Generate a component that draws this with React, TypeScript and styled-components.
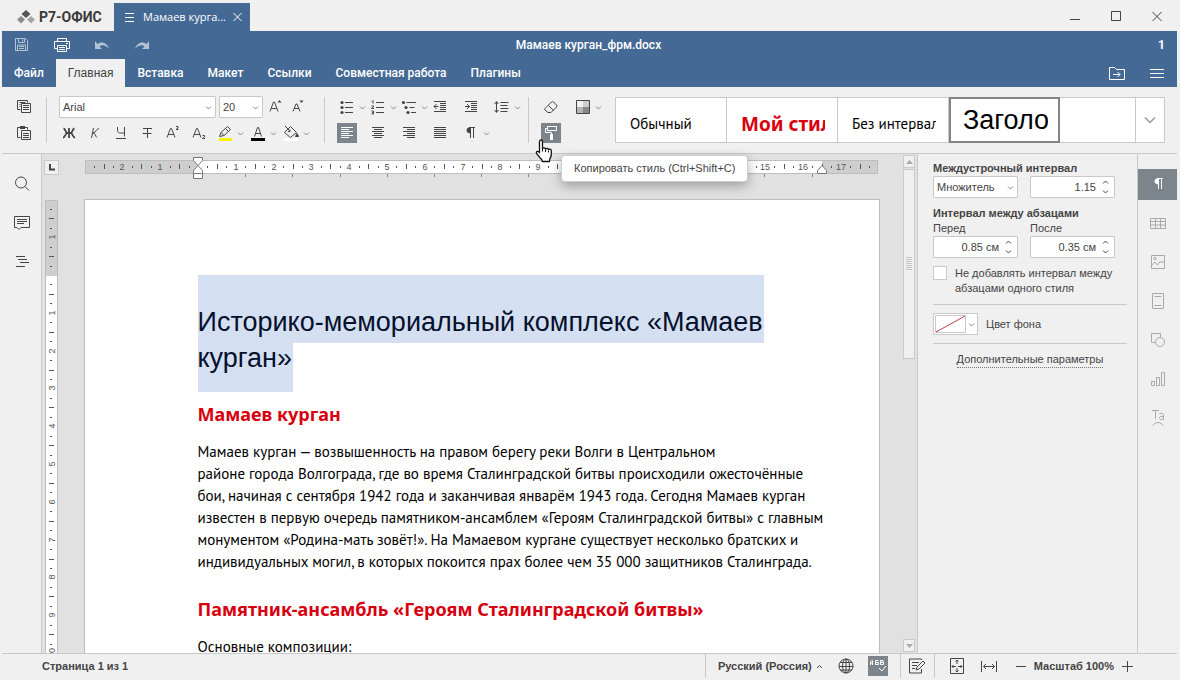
import React from 'react';
import styled, { createGlobalStyle, css } from 'styled-components';

const UI = `"Liberation Sans", Arial, sans-serif`;
const MENU = `Roboto, "Liberation Sans", sans-serif`;
const BODY = `"PT Sans", Roboto, sans-serif`;
const FUN = `"Comic Sans MS", "Noto Sans", sans-serif`;
const BLUE = '#446995';
const GRAY = '#f0f0f0';
const LINE = '#c9c9c9';
const INK = '#444';
const RED = '#d8000f';

const Global = createGlobalStyle`
  *, *::before, *::after { box-sizing: border-box; }
  html, body { margin: 0; background: ${GRAY}; }
  body { font: 11px/15px ${UI}; color: ${INK}; }
  button, input, select { font: inherit; color: inherit; }
  svg { display: block; }
`;

/* ---------- icons ---------- */

type IconProps = { children: React.ReactNode; w?: number; h?: number };
const Icon = ({ children, w = 20, h = 20 }: IconProps) => (
  <svg width={w} height={h} viewBox={`0 0 ${w} ${h}`} fill="none" stroke="currentColor" aria-hidden="true">
    {children}
  </svg>
);

const Chevron = () => (
  <Icon w={9} h={9}><path d="M2 3.500 4.500 6 7 3.500" /></Icon>
);

const Lines = ({ rows }: { rows: [number, number, number][] }) => (
  <>{rows.map(([x1, x2, y]) => <path key={y} d={`M${x1} ${y}H${x2}`} />)}</>
);
const ROWS = [4.5, 6.5, 8.5, 10.5, 12.5, 14.5];
const alignRows = (long: [number, number], short: [number, number]) =>
  ROWS.map((y, i) => (i % 2 ? [...short, y] : [...long, y]) as [number, number, number]);
const INDENT_ROWS: [number, number, number][] = [
  [4, 16, 4.5], [10, 16, 6.5], [10, 16, 8.5], [10, 16, 10.5], [10, 16, 12.5], [4, 16, 14.5],
];

/* ---------- shell ---------- */

const Shell = styled.div`
  display: flex;
  flex-direction: column;
  height: 100vh;
  padding: 0 3px 0 2px;
  background: ${GRAY};
  overflow: hidden;
`;

const Plain = styled.button`
  display: flex;
  align-items: center;
  justify-content: center;
  border: 0;
  padding: 0;
  background: none;
  color: inherit;
`;

const IconButton = styled(Plain)<{ $on?: boolean }>`
  width: 20px;
  height: 20px;
  flex: none;
  ${p => p.$on && css`background: #7d858c; color: #fff;`}
`;

/* ---------- title bar ---------- */

const TitleBar = styled.div`
  display: flex;
  height: 31px;
  padding: 3px 10px 0 15px;
`;
const Brand = styled.div`
  display: flex;
  align-items: center;
  gap: 4px;
  width: 97px;
  font: bold 14px/20px ${MENU};
  color: #3a3a3a;
`;
const DocTab = styled.div`
  display: flex;
  align-items: center;
  width: 136px;
  padding: 0 5px 0 8px;
  background: ${BLUE};
  color: #fff;
`;
const DocTabName = styled.span`
  flex: 1;
  padding-left: 7px;
  font: 11px/16px "Open Sans", sans-serif;
  white-space: nowrap;
`;
const WindowButtons = styled.div`
  display: flex;
  align-items: center;
  gap: 21px;
  margin-left: auto;
`;

/* ---------- header ---------- */

const Header = styled.header`
  background: ${BLUE};
  color: #fff;
`;
const QuickRow = styled.div`
  display: grid;
  grid-template-columns: 1fr auto 1fr;
  align-items: center;
  height: 28px;
  padding: 0 12px 0 10px;
  font: 500 12px/16px ${MENU};
`;
const QuickIcons = styled.div`
  display: flex;
  gap: 20px;
`;
const Faded = styled(IconButton)`
  opacity: 0.6;
`;
const Users = styled.span`
  justify-self: end;
  font-weight: bold;
`;
const TabRow = styled.nav`
  display: flex;
  height: 28px;
`;
const MenuTab = styled(Plain)<{ $active?: boolean }>`
  padding: 0 12px;
  font: 500 12px/16px ${MENU};
  ${p => p.$active && css`background: ${GRAY}; color: ${INK}; font: 12px/16px ${UI};`}
`;
const TabRowRight = styled.div`
  display: flex;
  align-items: center;
  gap: 20px;
  margin-left: auto;
  padding-right: 10px;
`;

/* ---------- toolbar ---------- */

const Toolbar = styled.div`
  position: relative;
  z-index: 2;
  display: flex;
  padding: 10px 12px;
  border-bottom: 1px solid ${LINE};
`;
const Group = styled.div<{ $pad: string; $last?: boolean }>`
  display: flex;
  flex-direction: column;
  gap: 6px;
  padding: ${p => p.$pad};
  border-right: ${p => (p.$last ? '0' : `1px solid ${LINE}`)};
`;
const ToolRow = styled.div<{ $gap?: number }>`
  display: flex;
  align-items: center;
  height: 20px;
  gap: ${p => p.$gap ?? 0}px;
`;
const Slot = styled.div<{ $w: number }>`
  display: flex;
  align-items: center;
  flex: none;
  width: ${p => p.$w}px;
`;
const Arrow = styled(Plain)`
  width: 9px;
  height: 20px;
  margin-left: 1px;
  color: #888;
`;
const Split = ({ w, label, children }: { w: number; label: string; children: React.ReactNode }) => (
  <Slot $w={w}>
    <IconButton aria-label={label}>{children}</IconButton>
    <Arrow aria-label={`${label}: меню`}><Chevron /></Arrow>
  </Slot>
);

const Combo = styled.div<{ $w: number }>`
  display: flex;
  align-items: center;
  flex: none;
  width: ${p => p.$w}px;
  height: 22px;
  padding-right: 2px;
  border: 1px solid ${LINE};
  border-radius: 1px;
  background: #fff;
  color: #888;
  select {
    flex: 1;
    min-width: 0;
    width: 100%;
    height: 100%;
    padding: 0 0 0 3px;
    border: 0;
    appearance: none;
    background: none;
    color: ${INK};
  }
  svg { flex: none; }
`;

const Gallery = styled.div`
  display: flex;
  flex: 1;
  height: 46px;
  min-width: 0;
  margin-left: 12px;
  border: 1px solid ${LINE};
  background: #fff;
`;
const StyleCell = styled(Plain)<{ $on?: boolean }>`
  flex: none;
  justify-content: flex-start;
  width: 111px;
  padding: 8px 12px 0 14px;
  border-right: 1px solid ${LINE};
  color: #000;
  ${p => p.$on && css`margin: -1px 0; padding: 0 10px 0 12px; border: 2px solid #848484;`}
`;
const StyleName = styled.span<{ $kind: 'body' | 'fun' | 'head' }>`
  overflow: hidden;
  white-space: nowrap;
  font: 15px/20px ${BODY};
  ${p => p.$kind === 'fun' && css`font: bold 19px/24px ${FUN}; color: ${RED};`}
  ${p => p.$kind === 'head' && css`font: 27px/32px ${UI};`}
`;
const GalleryMore = styled(Plain)`
  width: 29px;
  margin-left: auto;
  border-left: 1px solid ${LINE};
  color: #999;
`;

const PainterWrap = styled.div`
  position: relative;
`;
const Pointer = styled.div`
  position: absolute;
  left: -6px;
  top: 16px;
  z-index: 4;
`;
const Tooltip = styled.div`
  position: absolute;
  left: 20px;
  top: 32px;
  z-index: 3;
  padding: 5px 12px;
  border: 1px solid #cfcfcf;
  border-radius: 4px;
  background: #fff;
  box-shadow: 0 4px 12px rgba(0, 0, 0, 0.3);
  white-space: nowrap;
`;

/* ---------- workspace ---------- */

const Workspace = styled.main`
  display: flex;
  flex: 1;
  min-height: 0;
`;
const LeftRail = styled.aside`
  display: flex;
  flex-direction: column;
  align-items: center;
  gap: 19px;
  flex: none;
  width: 40px;
  padding-top: 20px;
  border-right: 1px solid ${LINE};
`;
const Editor = styled.div`
  display: grid;
  grid-template-columns: 18px minmax(0, 1fr);
  grid-template-rows: 26px minmax(0, 1fr);
  flex: 1;
  min-width: 0;
  background: #e1e1e1;
`;
const TabStop = styled(Plain)`
  width: 15px;
  height: 15px;
  margin: 6px 0 0 2px;
  border: 1px solid ${LINE};
  background: ${GRAY};
`;
const TopRuler = styled.div`
  display: flex;
  justify-content: center;
`;
const SideRuler = styled.div`
  width: 13px;
  margin: 20px 0 0 3px;
  overflow: hidden;
`;
const Canvas = styled.div`
  display: flex;
  justify-content: center;
  padding-top: 19px;
  overflow: hidden;
`;
const Page = styled.article`
  flex: none;
  width: 796px;
  padding: 75px 60px 0 113px;
  border: 1px solid #bdbdbd;
  border-bottom: 0;
  background: #fff;
  color: #000;
`;
const Title = styled.h1`
  margin: 0 0 10px;
  font: 27px/31px ${UI};
  color: #04102c;
`;
const Picked = styled.span<{ $w: number; $pad: string }>`
  display: block;
  width: ${p => p.$w}px;
  padding: ${p => p.$pad};
  background: #d5dff2;
  white-space: nowrap;
`;
const Heading = styled.h2`
  margin: 0 0 15px;
  font: bold 18px/24px ${FUN};
  color: ${RED};
  white-space: nowrap;
`;
const Para = styled.p`
  margin: 0 0 24px;
  font: 15px/22px ${BODY};
  white-space: nowrap;
`;
const Scroll = styled.div`
  display: flex;
  flex-direction: column;
  gap: 1px;
  flex: none;
  width: 15px;
  padding: 1px 2px 1px 0;
  border-right: 1px solid ${LINE};
  background: #e1e1e1;
`;
const ScrollButton = styled(Plain)`
  height: 13px;
  border: 1px solid ${LINE};
  background: ${GRAY};
  color: #aaa;
`;
const Thumb = styled.div`
  display: flex;
  align-items: center;
  justify-content: center;
  height: 190px;
  margin-bottom: auto;
  border: 1px solid ${LINE};
  background: ${GRAY};
  color: #c4c4c4;
`;

const Panel = styled.aside`
  flex: none;
  width: 219px;
  padding: 7px 10px 0 15px;
`;
const Section = styled.section`
  margin-bottom: 8px;
`;
const Rule = styled.hr`
  margin: 8px 0;
  border: 0;
  border-top: 1px solid ${LINE};
`;
const PanelTitle = styled.h3`
  margin: 0;
  font: bold 11px/15px ${UI};
`;
const Pair = styled.div`
  display: flex;
  gap: 12px;
`;
const Field = styled.label`
  display: flex;
  flex-direction: column;
  width: 85px;
`;
const Spin = styled.div`
  display: flex;
  align-items: center;
  width: 85px;
  height: 22px;
  padding-right: 4px;
  border: 1px solid ${LINE};
  border-radius: 1px;
  background: #fff;
  input {
    flex: 1;
    min-width: 0;
    padding: 0 5px 0 0;
    border: 0;
    background: none;
    text-align: right;
  }
`;
const Check = styled.label`
  display: flex;
  gap: 8px;
  input {
    flex: none;
    appearance: none;
    width: 14px;
    height: 14px;
    margin: 0;
    border: 1px solid ${LINE};
    background: #fff;
  }
`;
const ColorLine = styled.div`
  display: flex;
  align-items: center;
  gap: 8px;
`;
const ColorButton = styled(Plain)`
  width: 45px;
  height: 22px;
  border: 1px solid ${LINE};
  background: #fff;
  color: #888;
`;
const More = styled.div`
  text-align: center;
  a {
    display: inline-block;
    color: inherit;
    text-decoration: none;
    border-bottom: 1px dotted #777;
  }
`;
const RightRail = styled.aside`
  display: flex;
  flex-direction: column;
  gap: 8px;
  flex: none;
  width: 40px;
  padding-top: 15px;
  border-left: 1px solid ${LINE};
`;
const RailButton = styled(Plain)<{ $on?: boolean }>`
  align-items: flex-start;
  height: 31px;
  padding-top: 5px;
  color: #a9a9a9;
  ${p => p.$on && css`background: #7d858c; color: #fff;`}
`;

/* ---------- status bar ---------- */

const Status = styled.footer`
  display: flex;
  align-items: center;
  height: 27px;
  padding: 0 40px 2px 0;
  border-top: 1px solid ${LINE};
  font-weight: bold;
`;
const PageCount = styled.span`
  flex: 1;
  padding-left: 40px;
`;
const StatusGroup = styled.div<{ $gap: number; $pad: string }>`
  display: flex;
  align-items: center;
  gap: ${p => p.$gap}px;
  height: 24px;
  padding: ${p => p.$pad};
  border-left: 1px solid ${LINE};
`;
const Zoom = styled.div`
  display: flex;
  align-items: center;
  gap: 3px;
`;
const Language = styled(Plain)`
  gap: 3px;
  font-weight: bold;
`;

const CM = 37.8;

function HorizontalRuler() {
  const zero = 114;
  const quarters = Array.from({ length: 83 }, (_, i) => i - 11);
  return (
    <svg width="796" height="26" fill="none" stroke="#555">
      <rect x="1.500" y="6.500" width="792" height="13" fill="#cecece" stroke="#bdbdbd" />
      <rect x={zero} y="7" width="624" height="12" fill="#fff" stroke="none" />
      {quarters.map(q => {
        const x = Math.round(zero + (q * CM) / 4);
        if (q === 0 || x > 788) return null;
        if (q % 4 === 0)
          return (
            <text key={q} x={x} y="16" textAnchor="middle" fontSize="9" fill="#555" stroke="none">{Math.abs(q / 4)}</text>
          );
        return q % 2 === 0
          ? <path key={q} d={`M${x + 0.5} 10V15`} />
          : <path key={q} d={`M${x + 0.5} 12V14`} />;
      })}
      {Array.from({ length: 13 }, (_, i) => Math.round(zero + (i + 1) * 47.2)).map(x => (
        <path key={x} d={`M${x + 0.5} 20V23`} stroke="#888" />
      ))}
      <g fill="#fff" stroke="#777">
        <path d="M109.500 3.500h9v3l-4.500 5-4.500-5z" />
        <path d="M109.500 19.500v-3l4.500-5 4.500 5v3z" />
        <path d="M109.500 19.500h9v5h-9z" />
        <path d="M733.500 19.500v-3l4.500-5 4.500 5v3z" />
      </g>
    </svg>
  );
}

function VerticalRuler() {
  const zero = 75;
  const quarters = Array.from({ length: 52 }, (_, i) => i - 7);
  return (
    <svg width="13" height="640" fill="none" stroke="#555">
      <rect x="0.500" y="0.500" width="12" height="660" fill="#fff" stroke="#bdbdbd" />
      <rect x="1" y="1" width="11" height={zero} fill="#cecece" stroke="none" />
      {quarters.map(q => {
        const y = Math.round(zero + (q * CM) / 4);
        if (q === 0) return null;
        if (q % 4 === 0)
          return (
            <text key={q} transform={`translate(10 ${y}) rotate(-90)`} textAnchor="middle" fontSize="9" fill="#555" stroke="none">
              {Math.abs(q / 4)}
            </text>
          );
        return q % 2 === 0
          ? <path key={q} d={`M4 ${y + 0.5}H9`} />
          : <path key={q} d={`M5 ${y + 0.5}H7`} />;
      })}
    </svg>
  );
}

const SpinArrows = () => (
  <Icon w={9} h={16}><path d="M2 4.500 4.500 2 7 4.500M2 11.500 4.500 14 7 11.500" /></Icon>
);

const SpinBox = ({ value, label }: { value: string; label?: string }) => (
  <Spin>
    <input defaultValue={value} aria-label={label} />
    <SpinArrows />
  </Spin>
);

const Hand = () => (
  <svg width="20" height="24" viewBox="0 0 20 24" fill="#fff" stroke="#111" strokeWidth="1.300" strokeLinejoin="round">
    <path d="M4.500 2.500c0-2 3-2 3 0v7.500c.3-1.600 2.800-1.300 3 .2.500-1.200 2.700-.9 2.900.5.700-1 2.800-.6 2.900 1 .3 3.800.1 6-1.500 8.200l-.3 2.600H7.200l-.3-1.700C5 19 3.400 16.800 1.700 14.500c-1.200-1.800.7-3.200 2.800-.9z" />
    <path d="M7.500 10v2.500M10.500 10.500v2.500M13.500 11.500v2" strokeWidth="1" />
  </svg>
);

export default function App() {
  return (
    <Shell>
      <Global />
      <TitleBar>
        <Brand>
          <svg width="18" height="14" viewBox="0 0 18 14">
            <path d="M9 0l4.500 4L9 8 4.500 4z" fill="#555" />
            <path d="M4 6l4 3.500L4 13.500 0 9.500z" fill="#8b8b8b" />
            <path d="M14 6l4 3.500-4 4-4-4z" fill="#a5a5a5" />
          </svg>
          Р7-ОФИС
        </Brand>
        <DocTab>
          <Icon w={14} h={14}><path d="M3 3.500h9M3 7.500h9M3 11.500h9" /></Icon>
          <DocTabName>Мамаев курга...</DocTabName>
          <Plain aria-label="Закрыть вкладку"><Icon w={15} h={14}><path d="M3.500 3l8 8M11.500 3l-8 8" /></Icon></Plain>
        </DocTab>
        <WindowButtons>
          <IconButton aria-label="Свернуть"><Icon><path d="M5 12.500h10" /></Icon></IconButton>
          <IconButton aria-label="Развернуть"><Icon><path d="M5.500 4.500h9v9h-9z" /></Icon></IconButton>
          <IconButton aria-label="Закрыть"><Icon><path d="M5.500 5l9 9M14.500 5l-9 9" /></Icon></IconButton>
        </WindowButtons>
      </TitleBar>

      <Header>
        <QuickRow>
          <QuickIcons>
            <Faded aria-label="Сохранить"><Icon><path d="M3.500 3.500h10l2 2v10h-12zM6.500 3.500v4h6v-4M10.500 4.500v2M5.500 15v-5h8v5M7 11.500h5M7 13.500h5" /></Icon></Faded>
            <IconButton aria-label="Печать"><Icon><path d="M5.500 6.500v-3h9v3M5.500 13.500h-3v-7h15v7h-3M5.500 10.500h9v6h-9zM7 12.500h6M7 14.500h6M14 8.500h2" /></Icon></IconButton>
            <Faded aria-label="Отменить"><Icon><path d="M3 6v8h7L7.500 11.500c2-2 6-2 9.500 2.500C15.500 8 9.500 5.500 5.500 9z" fill="currentColor" stroke="none" /></Icon></Faded>
            <Faded aria-label="Повторить"><Icon><path d="M17 6v8h-7l2.500-2.500c-2-2-6-2-9.500 2.500C4.500 8 10.500 5.500 14.500 9z" fill="currentColor" stroke="none" /></Icon></Faded>
          </QuickIcons>
          <span>Мамаев курган_фрм.docx</span>
          <Users>1</Users>
        </QuickRow>
        <TabRow>
          <MenuTab>Файл</MenuTab>
          <MenuTab $active>Главная</MenuTab>
          <MenuTab>Вставка</MenuTab>
          <MenuTab>Макет</MenuTab>
          <MenuTab>Ссылки</MenuTab>
          <MenuTab>Совместная работа</MenuTab>
          <MenuTab>Плагины</MenuTab>
          <TabRowRight>
            <IconButton aria-label="Открыть расположение"><Icon><path d="M2.500 4.500h5l2 2h8v10h-15zM6 11.500h7M10.500 9l2.500 2.500-2.500 2.500" /></Icon></IconButton>
            <IconButton aria-label="Меню"><Icon><path d="M3 6.500h14M3 10.500h14M3 14.500h14" /></Icon></IconButton>
          </TabRowRight>
        </TabRow>
      </Header>

      <Toolbar>
        <Group $pad="0 12px 0 0">
          <ToolRow><IconButton aria-label="Копировать"><Icon><path d="M6.500 12.500h-3v-9h10v2M5.500 5.500h6M5.500 7.500h1M5.500 9.500h1M7.500 6.500h9v9h-9zM9 8.500h6M9 10.500h6M9 12.500h6" /></Icon></IconButton></ToolRow>
          <ToolRow><IconButton aria-label="Вставить"><Icon><path d="M6.500 14.500h-3v-10h10v2M7.500 7.500h9v9h-9zM9 10.500h6M9 12.500h6M9 14.500h6" /><path d="M6 3h5v3H6z" fill="currentColor" stroke="none" /></Icon></IconButton></ToolRow>
        </Group>

        <Group $pad="0 13px 0 12px">
          <ToolRow $gap={3}>
            <Combo $w={157}><select aria-label="Шрифт"><option>Arial</option></select><Chevron /></Combo>
            <Combo $w={44}><select aria-label="Размер шрифта"><option>20</option></select><Chevron /></Combo>
            <IconButton aria-label="Увеличить размер"><Icon><path d="M4 14.500 7.500 5h1L12 14.500M5.200 11.500h5.600" /><path d="M11.500 5.500l2-2.500 2 2.500z" fill="currentColor" stroke="none" /></Icon></IconButton>
            <IconButton aria-label="Уменьшить размер"><Icon><path d="M4 14.500 7 7h1l3 7.500M5 11.500h5" /><path d="M10.500 3.500h4l-2 2.500z" fill="currentColor" stroke="none" /></Icon></IconButton>
          </ToolRow>
          <ToolRow>
            <Slot $w={26}><IconButton aria-label="Полужирный"><Icon><path d="M10 5v10M4.500 5.500c2 0 2 4 3.500 4.500h4c1.500-.5 1.500-4.500 3.500-4.500M4 14.500c2 0 2.500-4 4-4.500M16 14.500c-2 0-2.500-4-4-4.500" strokeWidth="1.800" /></Icon></IconButton></Slot>
            <Slot $w={26}><IconButton aria-label="Курсив"><Icon><path d="M8.500 5l-2 10M14 5.500c-2.500 0-3 4.500-6 4.500 2.500 0 2.500 4 4 4.500" /></Icon></IconButton></Slot>
            <Slot $w={26}><IconButton aria-label="Подчёркнутый"><Icon><path d="M6.500 4v3.500c0 2 1.500 2.500 3 2.500h4M13.500 4v9.500M5 15.500h10" /></Icon></IconButton></Slot>
            <Slot $w={26}><IconButton aria-label="Зачёркнутый"><Icon><path d="M6 5.500h9M10.500 5.500v9.500M5.500 10.500h9" /></Icon></IconButton></Slot>
            <Slot $w={26}><IconButton aria-label="Надстрочный"><Icon><path d="M4 14.500 7.500 5.500h1L12 14.500M5.200 11.500h5.600M13 3.500h2v1.500l-2 1.500h2.500" /></Icon></IconButton></Slot>
            <Slot $w={26}><IconButton aria-label="Подстрочный"><Icon><path d="M4 14.500 7.500 5.500h1L12 14.500M5.200 11.500h5.600M13.500 12.500h2v1.500l-2 1.500h2.500" /></Icon></IconButton></Slot>
            <Split w={33} label="Цвет выделения"><Icon><path d="M4.500 13.500l1.500-4 6.500-6 3 3-6.500 6zM6 9.500l3 3M10.500 5.500l3 3" /><path d="M4 15h13v3H4z" fill="#f5f500" stroke="none" /></Icon></Split>
            <Split w={33} label="Цвет шрифта"><Icon><path d="M6.500 13.500 9.500 4.500h1l3 9M7.500 10.500h5" /><path d="M3 15h14v3H3z" fill="#000" stroke="none" /></Icon></Split>
            <Split w={30} label="Цвет фона абзаца"><Icon><path d="M3.500 9.500l6-6 6 6-6 5zM4 3l5 5M7 8.500h2v-2" /><path d="M16 10.500l1.500 3h-3z" fill="currentColor" /><path d="M3 15h14v3H3z" fill="#fff" stroke="none" /></Icon></Split>
          </ToolRow>
        </Group>

        <Group $pad="0 6px 0 12px">
          <ToolRow>
            <Split w={31} label="Маркированный список"><Icon><path d="M8 5.500h8M8 10.500h8M8 15.500h8" /><g fill="currentColor" stroke="none"><circle cx="5" cy="5.500" r="1.600" /><circle cx="5" cy="10.500" r="1.600" /><circle cx="5" cy="15.500" r="1.600" /></g></Icon></Split>
            <Split w={31} label="Нумерованный список"><Icon><path d="M8 5.500h8M8 10.500h8M8 15.500h8M4 4.500l1-1v3M3.500 9h2v1l-2 1.500H6M3.500 14h2v1.500H4h1.500v1.500h-2" /></Icon></Split>
            <Split w={31} label="Многоуровневый список"><Icon><path d="M7.500 5.500h9.500M10.500 10.500h5M12 15.500h5" /><g fill="currentColor" stroke="none"><circle cx="4.500" cy="5.500" r="1.600" /><circle cx="7" cy="10.500" r="1.600" /><circle cx="9" cy="15.500" r="1.600" /></g></Icon></Split>
            <Slot $w={31}><IconButton aria-label="Уменьшить отступ"><Icon><Lines rows={INDENT_ROWS} /><path d="M8.500 9.500H4M6.500 7L4 9.500 6.500 12" /></Icon></IconButton></Slot>
            <Slot $w={31}><IconButton aria-label="Увеличить отступ"><Icon><Lines rows={INDENT_ROWS} /><path d="M4 9.500h4.500M6 7l2.500 2.500L6 12" /></Icon></IconButton></Slot>
            <Split w={30} label="Междустрочный интервал"><Icon><path d="M8.500 5.500h8M8.500 8.500h7M8.500 11.500h8M8.500 14.500h7M4.500 5v10M2.500 7l2-2.500 2 2.500M2.500 13l2 2.500 2-2.500" /></Icon></Split>
          </ToolRow>
          <ToolRow>
            <Slot $w={31}><IconButton $on aria-label="По левому краю"><Icon><Lines rows={alignRows([4, 16], [4, 12])} /></Icon></IconButton></Slot>
            <Slot $w={31}><IconButton aria-label="По центру"><Icon><Lines rows={alignRows([4, 16], [6, 14])} /></Icon></IconButton></Slot>
            <Slot $w={31}><IconButton aria-label="По правому краю"><Icon><Lines rows={alignRows([4, 16], [8, 16])} /></Icon></IconButton></Slot>
            <Slot $w={31}><IconButton aria-label="По ширине"><Icon><Lines rows={alignRows([4, 16], [4, 16])} /></Icon></IconButton></Slot>
            <Split w={31} label="Непечатаемые символы"><Icon><path d="M9.500 4v11M12.500 4v11M8 4.500h6" /><path d="M10 4C4 4 4 10.500 10 10.500z" fill="currentColor" stroke="none" /></Icon></Split>
          </ToolRow>
        </Group>

        <Group $last $pad="0 0 0 12px">
          <ToolRow $gap={12}>
            <IconButton aria-label="Очистить стиль"><Icon><path d="M4 11.500 10.500 5q1-1 2 0l3 3q1 1 0 2L10 15.500H7L4 13q-.8-.8 0-1.500zM7.500 8.500l5 5" /></Icon></IconButton>
            <Split w={30} label="Цветовая схема"><Icon><path d="M10 4h6v6h-6z" fill="#ccc" stroke="none" /><path d="M4 10h6v6H4z" fill="#b5b5b5" stroke="none" /><path d="M10 10h6v6h-6z" fill="#888" stroke="none" /><path d="M3.500 3.500h13v13h-13z" /></Icon></Split>
          </ToolRow>
          <ToolRow>
            <PainterWrap>
              <IconButton $on aria-label="Копировать стиль"><Icon><path d="M6.500 3.500h9v4h-9zM6.500 5.500h-2v4h6v2" /><path d="M9 11h3v6H9z" fill="currentColor" stroke="none" /></Icon></IconButton>
              <Pointer><Hand /></Pointer>
              <Tooltip role="tooltip">Копировать стиль (Ctrl+Shift+C)</Tooltip>
            </PainterWrap>
          </ToolRow>
        </Group>

        <Gallery>
          <StyleCell><StyleName $kind="body">Обычный</StyleName></StyleCell>
          <StyleCell><StyleName $kind="fun">Мой стиль</StyleName></StyleCell>
          <StyleCell><StyleName $kind="body">Без интервала</StyleName></StyleCell>
          <StyleCell $on><StyleName $kind="head">Заголовок</StyleName></StyleCell>
          <GalleryMore aria-label="Все стили"><Icon w={14} h={14}><path d="M2 4.500l5 5 5-5" strokeWidth="1.500" /></Icon></GalleryMore>
        </Gallery>
      </Toolbar>

      <Workspace>
        <LeftRail>
          <IconButton aria-label="Поиск"><Icon><circle cx="9" cy="8.500" r="5.500" /><path d="M13 12.500l4 4" /></Icon></IconButton>
          <IconButton aria-label="Комментарии"><Icon><path d="M2.500 3.500h15v11H9l-2 2-2-2H2.500zM5 6.500h10M5 8.500h10M5 10.500h7" /></Icon></IconButton>
          <IconButton aria-label="Навигация"><Icon><path d="M4 4.500h9M6 7.500h9M8 10.500h9M4 14.500h9" /></Icon></IconButton>
        </LeftRail>

        <Editor>
          <TabStop aria-label="Тип табуляции"><Icon w={9} h={9}><path d="M3 1v5.500h5" strokeWidth="2" /></Icon></TabStop>
          <TopRuler><HorizontalRuler /></TopRuler>
          <SideRuler><VerticalRuler /></SideRuler>
          <Canvas>
            <Page>
              <Title>
                <Picked $w={566} $pad="32px 0 5px">Историко-мемориальный комплекс «Мамаев</Picked>
                <Picked $w={95} $pad="0 0 18px">курган»</Picked>
              </Title>
              <Heading>Мамаев курган</Heading>
              <Para>
                Мамаев курган — возвышенность на правом берегу реки Волги в Центральном<br />
                районе города Волгограда, где во время Сталинградской битвы происходили ожесточённые<br />
                бои, начиная с сентября 1942 года и заканчивая январём 1943 года. Сегодня Мамаев курган<br />
                известен в первую очередь памятником-ансамблем «Героям Сталинградской битвы» с главным<br />
                монументом «Родина-мать зовёт!». На Мамаевом кургане существует несколько братских и<br />
                индивидуальных могил, в которых покоится прах более чем 35 000 защитников Сталинграда.
              </Para>
              <Heading>Памятник-ансамбль «Героям Сталинградской битвы»</Heading>
              <Para>Основные композиции:</Para>
            </Page>
          </Canvas>
        </Editor>

        <Scroll>
          <ScrollButton aria-label="Вверх"><Icon w={9} h={9}><path d="M1 7l3.500-4L8 7z" fill="currentColor" stroke="none" /></Icon></ScrollButton>
          <Thumb><Icon w={6} h={14}><path d="M0 .5h6M0 2.500h6M0 4.500h6M0 6.500h6M0 8.500h6M0 10.500h6M0 12.500h6" /></Icon></Thumb>
          <ScrollButton aria-label="Вниз"><Icon w={9} h={9}><path d="M1 3l3.500 4L8 3z" fill="currentColor" stroke="none" /></Icon></ScrollButton>
        </Scroll>

        <Panel>
          <Section>
            <PanelTitle>Междустрочный интервал</PanelTitle>
            <Pair>
              <Combo $w={85}><select aria-label="Междустрочный интервал"><option>Множитель</option></select><Chevron /></Combo>
              <SpinBox value="1.15" label="Значение интервала" />
            </Pair>
          </Section>
          <Section>
            <PanelTitle>Интервал между абзацами</PanelTitle>
            <Pair>
              <Field>Перед<SpinBox value="0.85 см" /></Field>
              <Field>После<SpinBox value="0.35 см" /></Field>
            </Pair>
          </Section>
          <Check><input type="checkbox" /><span>Не добавлять интервал между абзацами одного стиля</span></Check>
          <Rule />
          <ColorLine>
            <ColorButton id="bg" aria-label="Выбрать цвет фона">
              <Icon w={32} h={18}><path d="M.5.500h30v17H.5z" stroke="#c9c9c9" /><path d="M1 17 30 1" stroke="#c0404d" /></Icon>
              <Chevron />
            </ColorButton>
            <label htmlFor="bg">Цвет фона</label>
          </ColorLine>
          <Rule />
          <More><a href="#advanced">Дополнительные параметры</a></More>
        </Panel>

        <RightRail>
          <RailButton $on aria-label="Параметры абзаца"><Icon><path d="M10.500 5v10M13.500 5v10M9 4.500h6" /><path d="M11 4C5 4 5 10.500 11 10.500z" fill="currentColor" stroke="none" /></Icon></RailButton>
          <RailButton aria-label="Параметры таблицы"><Icon><path d="M2.500 5.500h15v10h-15zM2.500 8.500h15M2.500 12h15M7.500 5.500v10M12.500 5.500v10" /></Icon></RailButton>
          <RailButton aria-label="Параметры изображения"><Icon><path d="M3.500 3.500h13v13h-13zM4 13l3-3 2.500 3 3-4 1.500 2 2-2" /><circle cx="7" cy="6.500" r="1.200" /></Icon></RailButton>
          <RailButton aria-label="Колонтитулы"><Icon><path d="M4.500 2.500h11v15h-11zM6.500 5.500h7M6.500 14.500h7" /></Icon></RailButton>
          <RailButton aria-label="Параметры фигуры"><Icon><path d="M7 12.500H3.500v-9h9V7" /><circle cx="12" cy="12" r="4.500" /></Icon></RailButton>
          <RailButton aria-label="Параметры диаграммы"><Icon><path d="M3.500 12.500h3v4h-3zM8.500 8.500h3v8h-3zM13.500 3.500h3v13h-3z" /></Icon></RailButton>
          <RailButton aria-label="Параметры объекта Text Art"><Icon><path d="M4 2.500h7M7.500 2.500v9M11.500 5.500h3l1 1v5M15.500 8.500h-3l-1 1v1l1 1h3M5 17.500c2-4 8-4 10 0" /></Icon></RailButton>
        </RightRail>
      </Workspace>

      <Status>
        <PageCount>Страница 1 из 1</PageCount>
        <StatusGroup $gap={12} $pad="0 12px">
          <Language>Русский (Россия)<Icon w={9} h={9}><path d="M2 6 4.500 3.500 7 6" /></Icon></Language>
          <IconButton aria-label="Язык документа"><Icon><circle cx="10" cy="10" r="7" /><ellipse cx="10" cy="10" rx="3.500" ry="7" /><path d="M10 3v14M3 10.500h14M4 6.500h12M4 14h12" /></Icon></IconButton>
          <IconButton $on aria-label="Проверка орфографии"><Icon><path d="M2.500 9V5.500l1-1h1V9M2.500 7h2M10.500 4.500h-3v4h3v-2h-3M12.500 4v4.500h3v-2h-3 2.500v-2h-2.500M11 12l3 3 4-5" /></Icon></IconButton>
        </StatusGroup>
        <StatusGroup $gap={0} $pad="0 7px 0 6px">
          <IconButton aria-label="Рецензирование"><Icon><path d="M14.500 4v-1h-12v14h12v-4M5 6.500h7M5 9.500h5M5 12.500h3M9 14l1-3 6-6 2 2-6 6z" /></Icon></IconButton>
        </StatusGroup>
        <StatusGroup $gap={12} $pad="0 0 0 12px">
          <IconButton aria-label="По размеру страницы"><Icon><path d="M3.500 2.500h13v15h-13zM10 4v4M10 12v4M5 10.500h4M11 10.500h4M8.500 5.500 10 4l1.500 1.500M8.500 14.500 10 16l1.500-1.500M6.500 9 5 10.500 6.500 12M13.500 9l1.500 1.500-1.500 1.500" /></Icon></IconButton>
          <IconButton aria-label="По ширине окна"><Icon><path d="M2.500 5v11M17.500 5v11M4.500 10.500h11M7 8l-2.500 2.500L7 13M13 8l2.500 2.500L13 13" /></Icon></IconButton>
          <Zoom>
            <IconButton aria-label="Мельче"><Icon><path d="M5 10.500h10" /></Icon></IconButton>
            <span>Масштаб 100%</span>
            <IconButton aria-label="Крупнее"><Icon><path d="M5 10.500h11M10.500 5v11" /></Icon></IconButton>
          </Zoom>
        </StatusGroup>
      </Status>
    </Shell>
  );
}
